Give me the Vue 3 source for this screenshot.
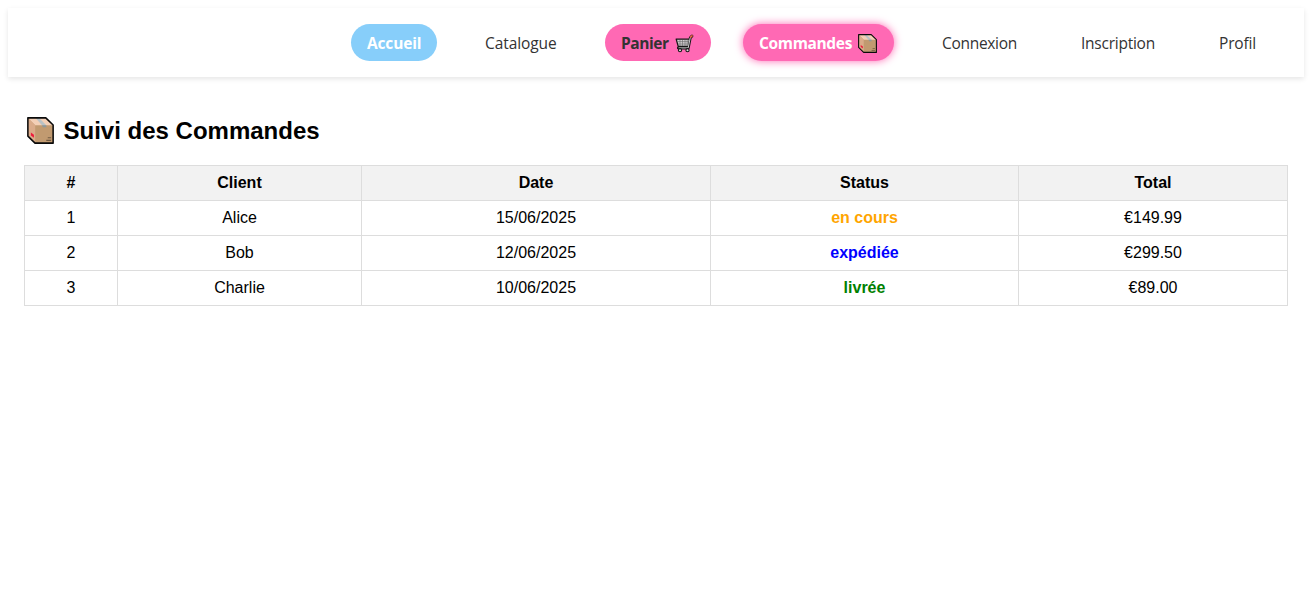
<script setup>
import { h } from 'vue'

const links = [
  { label: 'Accueil', cls: 'accueil' },
  { label: 'Catalogue', cls: 'catalogue' },
  { label: 'Panier', cls: 'panier', icon: 'cart' },
  { label: 'Commandes', cls: 'commandes', icon: 'box' },
  { label: 'Connexion', cls: 'connexion' },
  { label: 'Inscription', cls: 'inscription' },
  { label: 'Profil', cls: 'profil' },
]

const orders = [
  { id: 1, client: 'Alice', date: '15/06/2025', status: 'en cours', tone: 'pending', total: '€149.99' },
  { id: 2, client: 'Bob', date: '12/06/2025', status: 'expédiée', tone: 'shipped', total: '€299.50' },
  { id: 3, client: 'Charlie', date: '10/06/2025', status: 'livrée', tone: 'delivered', total: '€89.00' },
]

const BoxIcon = () =>
  h('svg', { viewBox: '0 0 28 28', 'aria-hidden': 'true' }, [
    h('path', { d: 'M.9.9H19.5L27.1 8.3V27.1H8.3L.9 19.8Z', fill: '#c19a70' }),
    h('path', { d: 'M1 1H19.5L27 8.5H8.5Z', fill: '#f3cfb6' }),
    h('path', { d: 'M1 1 8.5 8.5V27L1 19.8Z', fill: '#daab8a' }),
    h('path', { d: 'M9 1H12.6L20 8.5H15.5Z', fill: '#b9c2c6' }),
    h('path', { d: 'M15.5 8.5H20V10.5H16.5Z', fill: '#8d989c' }),
    h('path', { d: 'M4 16.2 7.2 18.4V21.4L4 19.2Z', fill: '#ee1c3c' }),
    h('path', { d: 'M21.5 21.5H25M20 24.3H25', fill: 'none', stroke: '#6f5941', 'stroke-width': 1.2 }),
    h('path', { d: 'M.9.9H19.5L27.1 8.3V27.1H8.3L.9 19.8Z', fill: 'none', stroke: '#0a0a0a', 'stroke-width': 1.6, 'stroke-linejoin': 'round' }),
  ])

const CartIcon = () =>
  h('svg', { viewBox: '0 0 19 19', 'aria-hidden': 'true' }, [
    h('path', { d: 'M3.3 14H13.3L15.3 3.8 17 2', fill: 'none', stroke: '#171717', 'stroke-width': 2.8, 'stroke-linejoin': 'round', 'stroke-linecap': 'round' }),
    h('path', { d: 'M1.2 5.2H14.5L13.3 12.4H3.2Z', fill: '#d2ced0', stroke: '#171717', 'stroke-width': 1.3, 'stroke-linejoin': 'round' }),
    h('path', { d: 'M2.5 7.6H13.5M3 10H13.2M5 6V12M7.5 6V12M10 6V12M12.2 6V12', fill: 'none', stroke: '#666', 'stroke-width': 0.6 }),
    h('path', { d: 'M3.6 13.9H13.2L15.2 3.8 16.8 2.2', fill: 'none', stroke: '#d0ced0', 'stroke-width': 1 }),
    h('path', { d: 'M15.6 3.2 17 1.9', stroke: '#ef6245', 'stroke-width': 1.7, 'stroke-linecap': 'round' }),
    h('circle', { cx: 5, cy: 16.2, r: 1.6, fill: '#d8d8d8', stroke: '#171717', 'stroke-width': 1.1 }),
    h('circle', { cx: 12.5, cy: 16.2, r: 1.6, fill: '#d8d8d8', stroke: '#171717', 'stroke-width': 1.1 }),
  ])
</script>

<template>
  <div class="page">
    <nav class="navbar">
      <a v-for="link in links" :key="link.cls" class="link" :class="link.cls">
        <span class="label">{{ link.label }}</span>
        <CartIcon v-if="link.icon === 'cart'" class="nav-icon" />
        <BoxIcon v-if="link.icon === 'box'" class="nav-icon" />
      </a>
    </nav>
    <main class="orders">
      <h2><BoxIcon class="title-icon" /><span>Suivi des Commandes</span></h2>
      <table>
        <colgroup>
          <col class="c-id"><col class="c-client"><col class="c-date"><col class="c-status"><col class="c-total">
        </colgroup>
        <thead>
          <tr><th>#</th><th>Client</th><th>Date</th><th>Status</th><th>Total</th></tr>
        </thead>
        <tbody>
          <tr v-for="o in orders" :key="o.id">
            <td>{{ o.id }}</td>
            <td>{{ o.client }}</td>
            <td>{{ o.date }}</td>
            <td class="status" :class="o.tone">{{ o.status }}</td>
            <td>{{ o.total }}</td>
          </tr>
        </tbody>
      </table>
    </main>
  </div>
</template>

<style>
body { background: #fff; }
</style>

<style scoped>
.page { padding: 8px; font-family: "Liberation Sans", Arial, sans-serif; color: #000; }
.navbar {
  display: flex;
  justify-content: flex-end;
  gap: 32px;
  padding: 16px 32px;
  background: #fff;
  box-shadow: 0 2px 5px rgba(0, 0, 0, 0.1);
}
.link {
  box-sizing: border-box;
  display: flex;
  align-items: center;
  height: 37px;
  padding: 1px 16px 0;
  border-radius: 20px;
  font: 400 15.5px/22px "Open Sans", "Noto Sans", sans-serif;
  color: #333;
  white-space: nowrap;
}
.accueil { width: 86px; background: #87cefa; color: #fff; font-weight: 700; letter-spacing: -0.15px; }
.catalogue { width: 104px; letter-spacing: -0.08px; }
.panier { width: 106px; background: #ff69b4; font-weight: 700; letter-spacing: -0.45px; }
.commandes { width: 151px; background: #ff69b4; color: #fff; font-weight: 700; letter-spacing: -0.35px; box-shadow: 0 0 8px #ff69b4; }
.connexion { width: 107px; letter-spacing: -0.3px; }
.inscription { width: 106px; letter-spacing: -0.25px; }
.profil { width: 69px; letter-spacing: -0.15px; }
.nav-icon { flex: none; width: 19px; height: 19px; margin: 0 1px 0 auto; }
.orders { padding: 16px; }
h2 {
  display: flex;
  align-items: center;
  height: 28px;
  margin: 24px 0 20px;
  padding-left: 3px;
  font-size: 24px;
  line-height: 28px;
}
h2 span { margin-left: 9.5px; }
.title-icon { width: 27px; height: 27px; margin-bottom: 1px; }
table { width: 1263px; table-layout: fixed; border-collapse: collapse; }
.c-id { width: 93px; }
.c-client { width: 244px; }
.c-date { width: 349px; }
.c-status { width: 308px; }
.c-total { width: 269px; }
th, td { height: 18px; padding: 8px; border: 1px solid #ddd; font-size: 16px; line-height: 18px; text-align: center; }
th { background: #f2f2f2; }
.status { font-weight: 700; }
.pending { color: orange; }
.shipped { color: blue; }
.delivered { color: green; }
</style>
